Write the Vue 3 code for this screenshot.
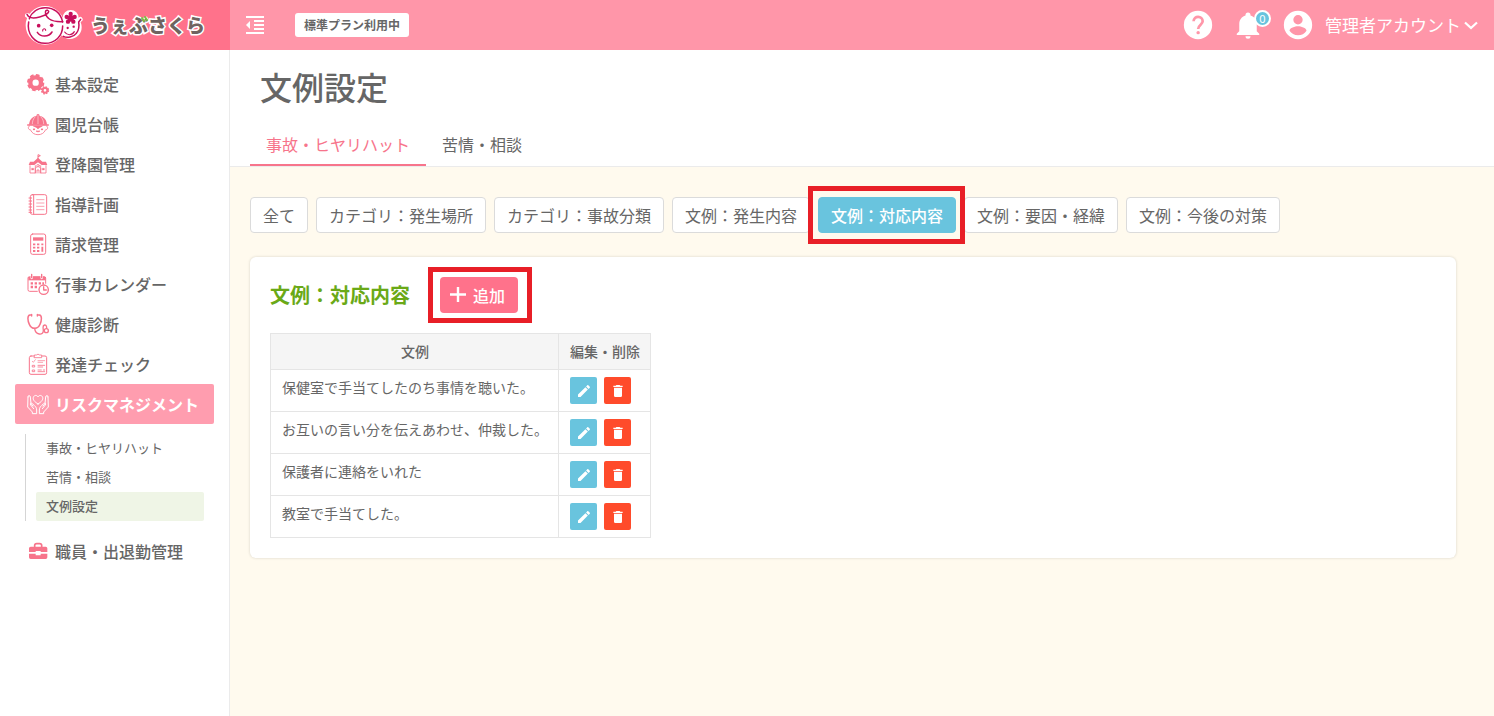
<script setup>
import { ref } from 'vue'

const menu = [
  { icon: 'gear', label: '基本設定' },
  { icon: 'child', label: '園児台帳' },
  { icon: 'school', label: '登降園管理' },
  { icon: 'note', label: '指導計画' },
  { icon: 'calc', label: '請求管理' },
  { icon: 'calendar', label: '行事カレンダー' },
  { icon: 'steth', label: '健康診断' },
  { icon: 'check', label: '発達チェック' },
  {
    icon: 'hands',
    label: 'リスクマネジメント',
    active: true,
    children: [
      { label: '事故・ヒヤリハット' },
      { label: '苦情・相談' },
      { label: '文例設定', active: true },
    ],
  },
  { icon: 'bag', label: '職員・出退勤管理' },
]

const tabs = ['事故・ヒヤリハット', '苦情・相談']
const currentTab = ref(0)

const filters = [
  '全て',
  'カテゴリ：発生場所',
  'カテゴリ：事故分類',
  '文例：発生内容',
  '文例：対応内容',
  '文例：要因・経緯',
  '文例：今後の対策',
]
const currentFilter = ref(4)

const rows = [
  '保健室で手当てしたのち事情を聴いた。',
  'お互いの言い分を伝えあわせ、仲裁した。',
  '保護者に連絡をいれた',
  '教室で手当てした。',
]
</script>

<template>
  <div class="app" lang="ja">
    <header class="header">
      <a class="brand" href="#">
        <svg class="brand-face" viewBox="75 9 174 132" aria-hidden="true">
          <g fill="#fff" stroke="#fff" stroke-width="14" stroke-linejoin="round">
            <circle cx="135" cy="76" r="51" />
            <circle cx="210" cy="82" r="28" />
            <circle cx="212" cy="54" r="17" />
            <path d="M82 46l12 6M241 58l-8 6" stroke-linecap="round" />
          </g>
          <g fill="none" stroke="#c8105c" stroke-width="4.500" stroke-linecap="round" stroke-linejoin="round">
            <path d="M188 66c-6-28-28-44-53-43-24 1-41 15-47 33M86 66c-7 36 19 64 49 64 30 0 53-22 53-52" />
            <path d="M81 43c4 12 22 12 38 8 19-5 34-16 24-20-10-3-9 16 5 26 12 9 27 8 40 8" />
            <path d="M190 109c11 6 30 3 39-9 8-10 9-23 7-34l6-8" />
            <path d="M112 97c10 15 34 15 44-1" />
            <path d="M128 93c-1-8 9-9 9-2" stroke-width="3.500" />
            <path d="M194 96c7 11 22 11 29-1" stroke-width="3.500" />
          </g>
          <g fill="#c8105c">
            <circle cx="116" cy="77" r="5.500" />
            <circle cx="155" cy="76" r="5.500" />
            <circle cx="203" cy="84" r="3.500" />
            <circle cx="221" cy="80" r="3.500" />
            <circle cx="212" cy="42" r="6.500" />
            <circle cx="224" cy="51" r="6.500" />
            <circle cx="220" cy="65" r="6.500" />
            <circle cx="204" cy="65" r="6.500" />
            <circle cx="200" cy="51" r="6.500" />
            <circle cx="212" cy="55" r="10" />
          </g>
        </svg>
        <span class="brand-name">うぇ<span class="bu">ぶ<svg class="leaf" viewBox="0 0 7 6" aria-hidden="true"><path d="M1 2l2 3M4 1l2 3" stroke="#7cc142" stroke-width="2" stroke-linecap="round" /></svg></span>さくら</span>
      </a>
      <div class="topbar">
        <button class="icon-btn" type="button" aria-label="メニュー開閉">
          <svg class="i24" viewBox="0 0 24 24"><path fill="currentColor" d="M11 13h10v-2H11m0-2h10V7H11M3 3v2h18V3M3 21h18v-2H3m0-7l4 4V8m4 9h10v-2H11z" /></svg>
        </button>
        <span class="plan">標準プラン利用中</span>
        <div class="tools">
          <button class="icon-btn" type="button" aria-label="ヘルプ">
            <svg class="i34" viewBox="0 0 24 24"><circle cx="12" cy="12" r="10" fill="currentColor" /><path d="M8.900 9.400c0-4.300 6.400-4.200 6.400 0 0 2.300-3.200 2.500-3.200 5.400" fill="none" stroke="#ff96a9" stroke-width="1.900" /><circle cx="12.100" cy="17.400" r="1.200" fill="#ff96a9" /></svg>
          </button>
          <button class="icon-btn bell" type="button" aria-label="お知らせ">
            <svg class="i30" viewBox="0 0 24 24"><path fill="currentColor" d="M21 19v1H3v-1l2-2v-6c0-3.100 2-5.800 5-6.700V4a2 2 0 0 1 4 0v.300c3 .900 5 3.600 5 6.700v6l2 2m-7 2a2 2 0 0 1-4 0" /></svg>
            <span class="badge">0</span>
          </button>
          <button class="account" type="button">
            <svg class="i34" viewBox="0 0 24 24"><path fill="currentColor" d="M12 2a10 10 0 1 0 0 20 10 10 0 0 0 0-20m0 3a3.300 3.300 0 1 1 0 6.600A3.300 3.300 0 0 1 12 5m0 14.200c-2.500 0-4.700-1.300-6-3.200 0-2 4-3.100 6-3.100s6 1.100 6 3.100a7.200 7.200 0 0 1-6 3.200" /></svg>
            <span>管理者アカウント</span>
            <svg class="chev" viewBox="0 0 14 9"><path d="M1 1.500l6 5.500 6-5.500" fill="none" stroke="currentColor" stroke-width="2.200" /></svg>
          </button>
        </div>
      </div>
    </header>

    <div class="body">
      <nav class="side">
        <ul class="menu">
          <li v-for="m in menu" :key="m.label">
            <a class="item" :class="{ active: m.active }" href="#">
              <svg class="mi" viewBox="0 -3 66 66" fill="none" stroke="currentColor" stroke-width="3" stroke-linejoin="round" stroke-linecap="round" aria-hidden="true">
                <template v-if="m.icon === 'gear'">
                  <circle cx="26" cy="26" r="16" stroke-width="13" />
                  <circle cx="26" cy="26" r="23" stroke-width="6" stroke-dasharray="11 7.060" stroke-linecap="butt" />
                  <circle cx="54" cy="49" r="7" stroke-width="6" />
                  <circle cx="54" cy="49" r="10.500" stroke-width="4" stroke-dasharray="5 3.250" stroke-linecap="butt" />
                </template>
                <template v-else-if="m.icon === 'child'">
                  <path d="M6 32C7 14 20 5 33 5s26 9 27 27z" fill="currentColor" stroke="none" />
                  <path d="M30 4q3-4 6 0M2 33h62" stroke-width="4" />
                  <path d="M24 9c-6 6-8 14-8 20M42 9c6 6 8 14 8 20M33 7v22" stroke="#fff" stroke-width="1.500" />
                  <path d="M7 36c-5 1-4 12 3 11 5 11 13 15 23 15s18-4 23-15c7 1 8-10 3-11" stroke-width="2.500" />
                  <path d="M20 36h26l-9 5q-4 6-8 0zM28 52q5 4 10 0z" fill="currentColor" stroke-width="2" />
                  <path d="M20 46h2M44 46h2" stroke-width="5" />
                </template>
                <template v-else-if="m.icon === 'school'">
                  <path d="M33 18V2l7 3-6 3" stroke-width="3" />
                  <path d="M33 11l13 12h11l4 10H44l-11-8-11 8H5l4-10h11z" fill="currentColor" stroke="none" />
                  <path d="M9 35v22h16V35M57 35v22H41V35M25 57V43l8-8 8 8v14M30 57v-9h6v9" stroke-width="2.500" />
                  <path d="M14 43h6v5h-6zM46 43h6v5h-6z" fill="currentColor" stroke-width="1" />
                  <circle cx="33" cy="35" r="4" stroke-width="2" />
                </template>
                <template v-else-if="m.icon === 'note'">
                  <rect x="10" y="2" width="49" height="59" rx="6" />
                  <path d="M20 3v57M6 12h8M6 21h8M6 30h8M6 39h8M6 48h8M6 55h8" />
                  <path d="M29 17h22M29 27h22M29 37h22M29 47h22" stroke-width="2" />
                </template>
                <template v-else-if="m.icon === 'calc'">
                  <rect x="11" y="0" width="45" height="61" rx="6" />
                  <path d="M18 10h31v10H18z" fill="currentColor" stroke="none" />
                  <path d="M18 31h7M30 31h7M43 31h6M18 41h7M30 41h7M18 51h7M30 51h7M46 38v15" stroke-width="5.500" stroke-linecap="butt" />
                </template>
                <template v-else-if="m.icon === 'calendar'">
                  <path d="M31 52H8q-5 0-5-5V12q0-4 5-4h43q5 0 5 4v16" />
                  <path d="M4 9h52v10H4z" fill="currentColor" stroke="none" />
                  <path d="M14 2v10M44 2v10" stroke="#fff" stroke-width="7" />
                  <path d="M14 1v10M44 1v10" stroke-width="4" />
                  <path d="M11 28h7M23 28h7M35 28h7M46 28h5M11 39h7M23 39h7" stroke-width="7" stroke-linecap="butt" />
                  <circle cx="50" cy="47" r="14" stroke-width="4" fill="#fff" />
                  <path d="M50 38v10h8" stroke-width="4" />
                </template>
                <template v-else-if="m.icon === 'steth'">
                  <g stroke-width="4.500">
                    <path d="M13 3H9C0 4 2 20 7 31c4 9 9 12 16 12s13-4 16-12c5-11 7-27-2-28h-4" />
                    <path d="M14 1v5M31 1v5M23 43c2 20 26 23 26 7 0-7-3-10 1-15" stroke-width="4" />
                    <circle cx="58" cy="50" r="6" stroke-width="4" />
                    <path d="M49 35c6-5 10 0 10 7" stroke-width="4" />
                  </g>
                </template>
                <template v-else-if="m.icon === 'check'">
                  <rect x="7" y="6" width="52" height="55" rx="5" />
                  <path d="M22 7V3h6q5-5 10 0h6v8H22z" fill="#fff" stroke-width="2.500" />
                  <path d="M16 22l3 3 6-8M33 20h20M33 25h14" stroke-width="2" />
                  <path d="M17 34h6v5h-6zM17 48h6v5h-6zM33 34h20M33 39h14M33 48h10M33 53h20M49 48h4" stroke-width="2.500" />
                </template>
                <template v-else-if="m.icon === 'hands'">
                  <path d="M33 30C22 23 17 17 19 10c3-8 11-7 14-1 3-6 11-7 14 1 2 7-3 13-14 20z" />
                  <path d="M3 9q-1-4 3-4t4 4l2 20 6 7M3 9l-1 30 14 15v5h13V48c0-8-4-11-13-19-5-4-8 0-5 4l9 11" />
                  <path d="M63 9q1-4-3-4t-4 4l-2 20-6 7M63 9l1 30-14 15v5H37V48c0-8 4-11 13-19 5-4 8 0 5 4l-9 11" />
                </template>
                <template v-else>
                  <path d="M23 17v-4q0-5 6-5h9q6 0 6 5v4" stroke-width="5" />
                  <path d="M11 17h45q5 0 5 5v11H41v-3H26v3H6V22q0-5 5-5zM6 38h20v5h15v-5h20v11q0 5-5 5H11q-5 0-5-5z" fill="currentColor" stroke="none" />
                </template>
              </svg>
              <span>{{ m.label }}</span>
            </a>
            <ul v-if="m.children" class="sub">
              <li v-for="c in m.children" :key="c.label">
                <a href="#" :class="{ active: c.active }">{{ c.label }}</a>
              </li>
            </ul>
          </li>
        </ul>
      </nav>

      <main class="main">
        <div class="head">
          <h1>文例設定</h1>
          <div class="tabs" role="tablist">
            <button v-for="(t, i) in tabs" :key="t" type="button" role="tab" class="tab" :class="{ on: i === currentTab }" :aria-selected="i === currentTab" @click="currentTab = i">{{ t }}</button>
          </div>
        </div>

        <div class="content">
          <div class="filters">
            <div v-for="(f, i) in filters" :key="f" class="slot">
              <button type="button" class="filter" :class="{ on: i === currentFilter }" @click="currentFilter = i">{{ f }}</button>
              <span v-if="i === 4" class="mark mark-filter"></span>
            </div>
          </div>

          <section class="card">
            <div class="card-head">
              <h2>文例：対応内容</h2>
              <div class="slot">
                <button type="button" class="add">
                  <svg viewBox="0 0 16 16" aria-hidden="true"><path d="M8 0v15M0 7.500h16" stroke="currentColor" stroke-width="2.400" /></svg>
                  追加
                </button>
                <span class="mark mark-add"></span>
              </div>
            </div>
            <table>
              <thead>
                <tr><th>文例</th><th>編集・削除</th></tr>
              </thead>
              <tbody>
                <tr v-for="r in rows" :key="r">
                  <td class="phrase">{{ r }}</td>
                  <td>
                    <div class="ops">
                      <button type="button" class="op edit" aria-label="編集">
                        <svg viewBox="0 0 24 24"><path fill="currentColor" d="M20.700 7c.400-.400.400-1 0-1.400l-2.300-2.300c-.400-.400-1.100-.400-1.400 0l-1.900 1.800 3.800 3.800M3 17.300V21h3.800L17.800 9.900l-3.700-3.700z" /></svg>
                      </button>
                      <button type="button" class="op del" aria-label="削除">
                        <svg viewBox="0 0 24 24"><path fill="currentColor" d="M19 4h-3.500l-1-1h-5l-1 1H5v2h14M6 19a2 2 0 0 0 2 2h8a2 2 0 0 0 2-2V7H6z" /></svg>
                      </button>
                    </div>
                  </td>
                </tr>
              </tbody>
            </table>
          </section>
        </div>
      </main>
    </div>
  </div>
</template>

<style>
body {
  margin: 0;
}
</style>

<style scoped>
* {
  box-sizing: border-box;
}
.app {
  min-height: 100vh;
  display: flex;
  flex-direction: column;
  background: #fff;
  color: #666;
  font-family: "Noto Sans CJK JP", sans-serif;
  font-size: 16px;
  line-height: 24px;
}
button {
  font: inherit;
  color: inherit;
  margin: 0;
  padding: 0;
  border: 0;
  background: none;
  cursor: pointer;
  white-space: nowrap;
}
a {
  color: inherit;
  text-decoration: none;
}
ul {
  list-style: none;
  margin: 0;
  padding: 0;
}
svg {
  display: block;
  flex: none;
}
.header {
  display: flex;
  height: 50px;
  color: #fff;
}
.brand {
  width: 230px;
  flex: none;
  display: flex;
  align-items: center;
  gap: 8px;
  padding-left: 25px;
  background: #ff728b;
}
.brand-face {
  width: 58px;
  height: 44px;
}
.brand-name {
  font-size: 19px;
  font-weight: 900;
  color: #6f6360;
  -webkit-text-stroke: 3px #fff;
  paint-order: stroke fill;
  white-space: nowrap;
}
.bu {
  position: relative;
}
.leaf {
  position: absolute;
  top: 5px;
  right: 0;
  width: 7px;
  height: 6px;
}
.topbar {
  flex: 1;
  display: flex;
  align-items: center;
  padding: 0 16px 0 13px;
  background: #ff96a9;
}
.i24 {
  width: 24px;
  height: 24px;
}
.i30 {
  width: 30px;
  height: 30px;
}
.i34 {
  width: 34px;
  height: 34px;
}
.plan {
  margin-left: 28px;
  padding: 0 9px;
  border-radius: 3px;
  background: #fff;
  color: #666;
  font-size: 12px;
  font-weight: 700;
}
.tools {
  margin-left: auto;
  display: flex;
  align-items: center;
  gap: 16px;
}
.bell {
  position: relative;
  padding: 0 2px;
}
.badge {
  position: absolute;
  top: 0;
  right: -6px;
  width: 17px;
  height: 17px;
  border: 2px solid #fff;
  border-radius: 50%;
  background: #69c4de;
  font-family: "Noto Sans", sans-serif;
  font-size: 11px;
  line-height: 13px;
}
.account {
  display: flex;
  align-items: center;
  font-size: 17px;
}
.account span {
  margin: 0 3px 0 10px;
}
.chev {
  width: 14px;
  height: 9px;
}
.body {
  flex: 1;
  display: flex;
}
.side {
  width: 230px;
  flex: none;
  padding: 14px 15px 20px;
  border-right: 1px solid #ebebeb;
}
.item {
  display: flex;
  align-items: center;
  gap: 6px;
  height: 40px;
  padding-left: 12px;
  border-radius: 2px;
  font-weight: 500;
  white-space: nowrap;
}
.mi {
  width: 22px;
  height: 22px;
  overflow: visible;
  color: #f7748b;
}
.item.active {
  background: #ff9daf;
  color: #fff;
  font-weight: 700;
}
.item.active .mi {
  color: #fff;
}
.sub {
  margin: 10px 10px;
  padding-left: 10px;
  border-left: 1px solid #d5d5d5;
}
.sub a {
  display: block;
  padding: 0 10px 2px;
  border-radius: 2px;
  font-size: 13px;
  line-height: 27px;
}
.sub a.active {
  background: #eff5e6;
  font-weight: 500;
}
.main {
  flex: 1;
  min-width: 0;
  display: flex;
  flex-direction: column;
}
.head {
  padding: 14px 20px 0;
  border-bottom: 1px solid #ebebeb;
}
h1 {
  margin: 0;
  padding-left: 10px;
  font-size: 32px;
  font-weight: 500;
  line-height: 44px;
}
.tabs {
  display: flex;
  margin-top: 16px;
}
.tab {
  padding: 8px 16px;
  border-bottom: 2px solid transparent;
}
.tab.on {
  color: #f7748b;
  border-color: #f7748b;
}
.content {
  flex: 1;
  padding: 30px 38px 30px 20px;
  background: #fffaee;
}
.filters {
  display: flex;
  flex-wrap: wrap;
  gap: 8px;
}
.slot {
  position: relative;
}
.filter {
  height: 36px;
  padding: 0 12px;
  border: 1px solid #dbdbdb;
  border-radius: 4px;
  background: #fff;
}
.filter.on {
  border-color: #69c4de;
  background: #69c4de;
  color: #fff;
  font-weight: 500;
}
.mark {
  position: absolute;
  z-index: 1;
  border: 5px solid #e81f27;
  pointer-events: none;
}
.mark-filter {
  inset: -11px -9px -11px -10px;
}
.mark-add {
  inset: -10px -14px -10px -12px;
}
.card {
  margin-top: 24px;
  padding: 20px 20px;
  border-radius: 6px;
  background: #fff;
  box-shadow: 0 0 3px rgba(0, 0, 0, 0.16);
}
.card-head {
  display: flex;
  align-items: center;
  gap: 30px;
  margin-bottom: 20px;
}
h2 {
  margin: 0;
  color: #6aa917;
  font-size: 20px;
  font-weight: 700;
}
.add {
  display: flex;
  align-items: center;
  gap: 7px;
  height: 36px;
  padding: 0 13px 0 10px;
  border-radius: 4px;
  background: #ff728b;
  color: #fff;
  font-weight: 500;
}
.add svg {
  width: 16px;
  height: 16px;
}
table {
  border-collapse: collapse;
  font-size: 14px;
}
th,
td {
  border: 1px solid #e5e5e5;
  padding: 7px 10px 7px 11px;
  line-height: 21px;
  vertical-align: top;
  white-space: nowrap;
}
th {
  background: #f5f5f5;
  font-weight: 500;
}
.ops {
  display: flex;
  gap: 7px;
}
.op {
  width: 27px;
  height: 27px;
  display: flex;
  align-items: center;
  justify-content: center;
  border-radius: 2px;
  color: #fff;
}
.op svg {
  width: 16px;
  height: 16px;
}
.edit {
  background: #69c4de;
}
.del {
  background: #ff4b2b;
}
</style>
